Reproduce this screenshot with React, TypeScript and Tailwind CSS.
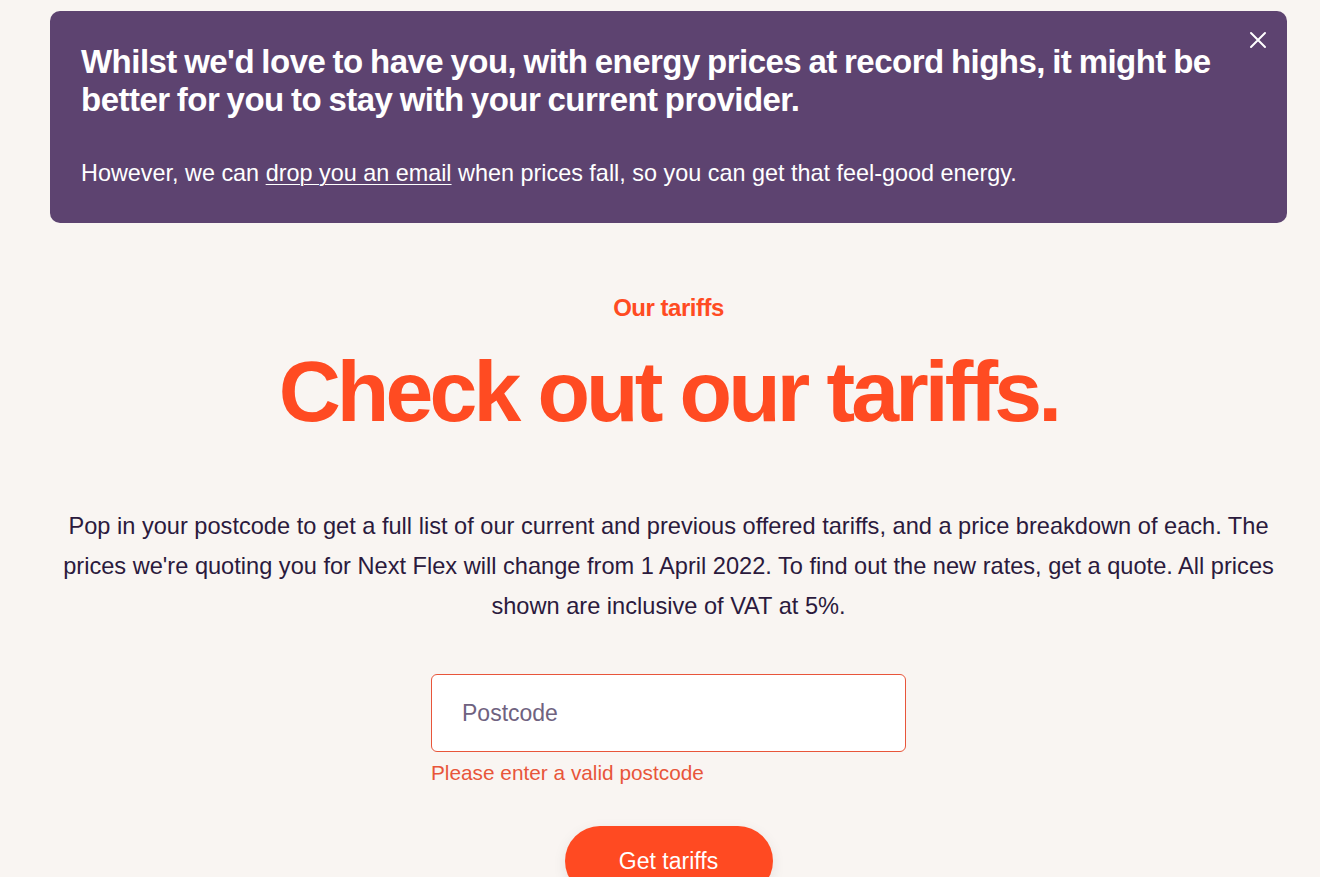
import { useState } from "react";

const App = () => {
  const [postcode, setPostcode] = useState("");
  const [showBanner, setShowBanner] = useState(true);

  return (
    <div className="min-h-[877px] w-full overflow-hidden bg-[#f9f5f2] font-['Liberation_Sans',Arial,sans-serif]">
      <div className="w-[1337px]">
        {showBanner && (
          <div className="mx-[50px] mt-[11px] relative rounded-[10px] bg-[#5d4370] pl-[31px] pr-[50px] pt-[32px] pb-[34px] text-white">
            <button
              onClick={() => setShowBanner(false)}
              className="absolute right-[16px] top-[16px] p-1"
              aria-label="Close"
            >
              <svg width="18" height="18" viewBox="0 0 18 18" fill="none">
                <path d="M2 2L16 16M16 2L2 16" stroke="white" strokeWidth="2" strokeLinecap="round" />
              </svg>
            </button>
            <h2 className="text-[33px] leading-[38px] font-bold tracking-[-0.016em] [word-spacing:-0.04em]">
              Whilst we'd love to have you, with energy prices at record highs, it might be better for you to stay with your current provider.
            </h2>
            <p className="mt-[38px] text-[23.4px] leading-[32px]">
              However, we can{" "}
              <a href="#" className="underline underline-offset-[3px] decoration-1">
                drop you an email
              </a>{" "}
              when prices fall, so you can get that feel-good energy.
            </p>
          </div>
        )}

        <div className="flex flex-col items-center">
          <p className="mt-[71px] text-[24px] leading-[28px] font-bold tracking-[-0.02em] text-[#ff4b22]">
            Our tariffs
          </p>
          <h1 className="mt-[21px] text-[86px] leading-[96px] font-bold tracking-[-0.045em] text-[#ff4b22]">
            Check out our tariffs.
          </h1>
          <p className="mt-[67px] w-[1215px] text-center text-[23.6px] leading-[40px] text-[#2b1a3d]">
            Pop in your postcode to get a full list of our current and previous offered tariffs, and a price breakdown of each. The prices we're quoting you for Next Flex will change from 1 April 2022. To find out the new rates, get a quote. All prices shown are inclusive of VAT at 5%.
          </p>

          <div className="mt-[48px] w-[475px]">
            <input
              value={postcode}
              onChange={(e) => setPostcode(e.target.value)}
              placeholder="Postcode"
              className="h-[78px] w-full rounded-[6px] border border-[#e8553a] bg-white px-[30px] text-[23px] text-[#2b1a3d] outline-none placeholder:text-[#6f6280]"
            />
            <p className="mt-[7px] text-[20.8px] leading-[28px] text-[#e8553a]">Please enter a valid postcode</p>
          </div>

          <button className="mt-[39px] h-[70px] w-[208px] rounded-full bg-[#ff4a22] text-[23px] text-white shadow-[0_4px_14px_rgba(0,0,0,0.08)]">
            Get tariffs
          </button>
        </div>
      </div>
    </div>
  );
};

export default App;
